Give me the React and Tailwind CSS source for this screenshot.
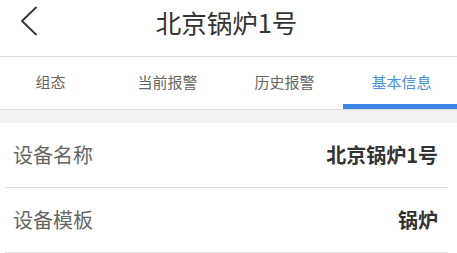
import React from 'react';

export default function App() {
  const tabs = ['组态', '当前报警', '历史报警', '基本信息'];
  const active = 3;
  const rows = [
    { label: '设备名称', value: '北京锅炉1号' },
    { label: '设备模板', value: '锅炉' },
  ];

  return (
    <div
      className="w-[457px] h-[253px] overflow-hidden bg-white"
      style={{ fontFamily: '"Noto Sans CJK SC", "Noto Sans", sans-serif' }}
    >
      {/* header */}
      <div className="relative h-[57px] flex items-center justify-center border-b border-[#dcdcdc]">
        <svg
          className="absolute left-[19px] top-[6px]"
          width="20"
          height="30"
          viewBox="0 0 20 30"
          fill="none"
          stroke="#333"
          strokeWidth="1.8"
          strokeLinecap="round"
          strokeLinejoin="round"
        >
          <path d="M17 1.5 L3 15 L17 28.5" />
        </svg>
        <span className="text-[25.5px] leading-none text-[#333] -mt-[12px] -ml-[4px]">北京锅炉1号</span>
      </div>

      {/* tabs */}
      <div className="h-[53px] overflow-hidden border-b border-[#dcdcdc]">
        <div className="grid grid-cols-4 w-[468px] -ml-[8px] h-full">
          {tabs.map((t, i) => (
            <div key={t} className="relative flex items-center justify-center">
              <span
                className={`text-[15px] leading-none -mt-[4px] ${
                  i === active ? 'text-[#4a8fe0]' : 'text-[#666]'
                }`}
              >
                {t}
              </span>
              {i === active && (
                <div className="absolute left-0 right-0 bottom-0 h-[5px] bg-[#3b86e6]" />
              )}
            </div>
          ))}
        </div>
      </div>

      {/* gray band */}
      <div className="h-[13px] bg-[#f2f2f2]" />

      {/* info rows */}
      {rows.map((r) => (
        <div key={r.label}>
          <div className="h-[64px] flex items-center justify-between pl-[13px] pr-[19px]">
            <span className="text-[20px] leading-none text-[#666]">{r.label}</span>
            <span className="text-[20px] leading-none font-bold text-[#333]">{r.value}</span>
          </div>
          <div className="h-px ml-[5px] mr-[9px] bg-[#dedede]" />
        </div>
      ))}
    </div>
  );
}
